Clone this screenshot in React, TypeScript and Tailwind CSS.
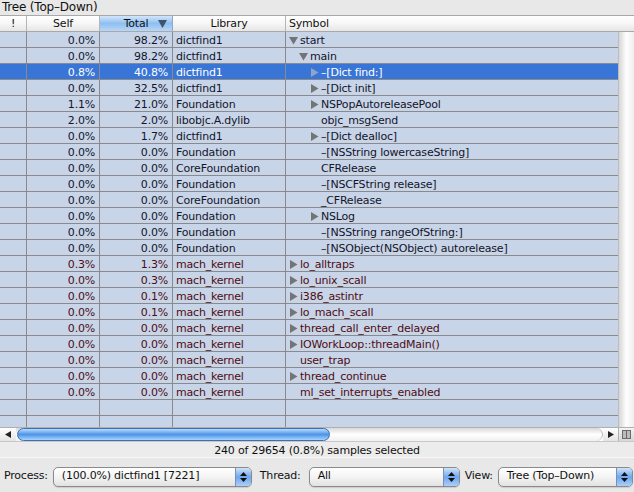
import React from "react";

type Row = {
  self: string;
  total: string;
  lib: string;
  sym: string;
  level: number;
  tri?: "open" | "closed";
  kernel?: boolean;
  selected?: boolean;
};

const rows: Row[] = [
  { self: "0.0%", total: "98.2%", lib: "dictfind1", sym: "start", level: 0, tri: "open" },
  { self: "0.0%", total: "98.2%", lib: "dictfind1", sym: "main", level: 1, tri: "open" },
  { self: "0.8%", total: "40.8%", lib: "dictfind1", sym: "\u2013[Dict find:]", level: 2, tri: "closed", selected: true },
  { self: "0.0%", total: "32.5%", lib: "dictfind1", sym: "\u2013[Dict init]", level: 2, tri: "closed" },
  { self: "1.1%", total: "21.0%", lib: "Foundation", sym: "NSPopAutoreleasePool", level: 2, tri: "closed" },
  { self: "2.0%", total: "2.0%", lib: "libobjc.A.dylib", sym: "objc_msgSend", level: 2 },
  { self: "0.0%", total: "1.7%", lib: "dictfind1", sym: "\u2013[Dict dealloc]", level: 2, tri: "closed" },
  { self: "0.0%", total: "0.0%", lib: "Foundation", sym: "\u2013[NSString lowercaseString]", level: 2 },
  { self: "0.0%", total: "0.0%", lib: "CoreFoundation", sym: "CFRelease", level: 2 },
  { self: "0.0%", total: "0.0%", lib: "Foundation", sym: "\u2013[NSCFString release]", level: 2 },
  { self: "0.0%", total: "0.0%", lib: "CoreFoundation", sym: "_CFRelease", level: 2 },
  { self: "0.0%", total: "0.0%", lib: "Foundation", sym: "NSLog", level: 2, tri: "closed" },
  { self: "0.0%", total: "0.0%", lib: "Foundation", sym: "\u2013[NSString rangeOfString:]", level: 2 },
  { self: "0.0%", total: "0.0%", lib: "Foundation", sym: "\u2013[NSObject(NSObject) autorelease]", level: 2 },
  { self: "0.3%", total: "1.3%", lib: "mach_kernel", sym: "lo_alltraps", level: 0, tri: "closed", kernel: true },
  { self: "0.0%", total: "0.3%", lib: "mach_kernel", sym: "lo_unix_scall", level: 0, tri: "closed", kernel: true },
  { self: "0.0%", total: "0.1%", lib: "mach_kernel", sym: "i386_astintr", level: 0, tri: "closed", kernel: true },
  { self: "0.0%", total: "0.1%", lib: "mach_kernel", sym: "lo_mach_scall", level: 0, tri: "closed", kernel: true },
  { self: "0.0%", total: "0.0%", lib: "mach_kernel", sym: "thread_call_enter_delayed", level: 0, tri: "closed", kernel: true },
  { self: "0.0%", total: "0.0%", lib: "mach_kernel", sym: "IOWorkLoop::threadMain()", level: 0, tri: "closed", kernel: true },
  { self: "0.0%", total: "0.0%", lib: "mach_kernel", sym: "user_trap", level: 0, kernel: true },
  { self: "0.0%", total: "0.0%", lib: "mach_kernel", sym: "thread_continue", level: 0, tri: "closed", kernel: true },
  { self: "0.0%", total: "0.0%", lib: "mach_kernel", sym: "ml_set_interrupts_enabled", level: 0, kernel: true },
];

const indents = ["pl-[3px]", "pl-[13px]", "pl-[24px]"];

function Tri({ open, color }: { open: boolean; color: string }) {
  return (
    <svg width="9" height="9" viewBox="0 0 9 9" className="shrink-0">
      {open ? (
        <polygon points="0,1 9,1 4.5,8.5" fill={color} />
      ) : (
        <polygon points="1,0 8.5,4.5 1,9" fill={color} />
      )}
    </svg>
  );
}

function Popup({ label, width }: { label: string; width: string }) {
  return (
    <div
      className={`${width} h-[20px] flex items-stretch rounded-[5px] border border-[#8a8a8a] bg-gradient-to-b from-white via-[#f4f4f4] to-[#e2e2e2] overflow-hidden shadow-[0_1px_1px_rgba(0,0,0,0.12)]`}
    >
      <div className="flex-1 pl-[8px] flex items-center text-[#111] whitespace-nowrap">{label}</div>
      <div className="w-[16px] border-l border-[#7b8fae] bg-gradient-to-b from-[#cfe3fb] via-[#6fa6ec] to-[#a9cff8] flex flex-col items-center justify-center gap-[2px]">
        <svg width="7" height="4" viewBox="0 0 7 4">
          <polygon points="3.5,0 7,4 0,4" fill="#111" />
        </svg>
        <svg width="7" height="4" viewBox="0 0 7 4">
          <polygon points="0,0 7,0 3.5,4" fill="#111" />
        </svg>
      </div>
    </div>
  );
}

const cols = "grid grid-cols-[27px_73px_73px_113px_1fr]";

export default function App() {
  return (
    <div className="w-[634px] h-[492px] bg-[#e8e8e8] flex flex-col overflow-hidden font-['DejaVu_Sans',sans-serif] text-[11px] tracking-[-0.2px]">
      <div className="h-[15px] pl-[2px] leading-[14px] text-[12px] text-[#111]">Tree (Top&ndash;Down)</div>

      <div className={`${cols} h-[17px] border-y border-[#a8a8a8] bg-gradient-to-b from-white via-[#f6f6f6] to-[#e6e6e6] text-[#111] leading-[15px]`}>
        <div className="text-center border-r border-[#b5b5b5]">!</div>
        <div className="text-center border-r border-[#b5b5b5]">Self</div>
        <div className="relative text-center border-r border-[#8ea8c8] bg-gradient-to-b from-[#d3e6fb] via-[#8fbef0] to-[#b8d7f7]">
          Total
          <svg width="9" height="8" viewBox="0 0 9 8" className="absolute right-[5px] top-[4px]">
            <polygon points="0,0 9,0 4.5,8" fill="#3c5470" />
          </svg>
        </div>
        <div className="text-center border-r border-[#b5b5b5]">Library</div>
        <div className="pl-[3px]">Symbol</div>
      </div>

      <div className="h-[395px] flex">
        <div className="w-[618px] bg-[#c8d4e8] overflow-hidden">
          {rows.map((r, i) => {
            const text = r.selected ? "text-white" : r.kernel ? "text-[#4e0d12]" : "text-[#14142a]";
            const triColor = r.selected ? "#8ea4c8" : "#747474";
            return (
              <div
                key={i}
                className={`${cols} h-[16px] leading-[15px] border-b border-[#8a8a8a] ${r.selected ? "bg-[#3875d7]" : ""} ${text}`}
              >
                <div className="border-r border-[#8a8a8a]" />
                <div className="text-right pr-[4px] pt-[1px] border-r border-[#8a8a8a]">{r.self}</div>
                <div className="text-right pr-[4px] pt-[1px] border-r border-[#8a8a8a]">{r.total}</div>
                <div className="pl-[3px] pt-[1px] border-r border-[#8a8a8a] whitespace-nowrap">{r.lib}</div>
                <div className={`${indents[r.level]} pt-[1px] flex items-center whitespace-nowrap`}>
                  <span className="w-[11px] flex items-center">
                    {r.tri && <Tri open={r.tri === "open"} color={triColor} />}
                  </span>
                  <span>{r.sym}</span>
                </div>
              </div>
            );
          })}
          {[0, 1].map((i) => (
            <div key={`e${i}`} className={`${cols} h-[16px] border-b border-[#8a8a8a]`}>
              <div className="border-r border-[#8a8a8a]" />
              <div className="border-r border-[#8a8a8a]" />
              <div className="border-r border-[#8a8a8a]" />
              <div className="border-r border-[#8a8a8a]" />
              <div />
            </div>
          ))}
        </div>
        <div className="w-[16px] bg-gradient-to-r from-[#d6d6d6] via-white to-[#eeeeee] border-l border-[#bdbdbd]" />
      </div>

      <div className="h-[14px] flex bg-white border-t border-[#b0b0b0]">
        <div className="w-[16px] flex items-center justify-center bg-gradient-to-b from-white to-[#e4e4e4]">
          <svg width="6" height="7" viewBox="0 0 6 7">
            <polygon points="6,0 6,7 0,3.5" fill="#222" />
          </svg>
        </div>
        <div className="flex-1 relative bg-gradient-to-b from-[#d9d9d9] via-white to-[#f0f0f0] rounded-r-[7px] border-r border-[#b8b8b8]">
          <div className="absolute left-[1px] top-0 h-[13px] w-[313px] rounded-[7px] border border-[#3d6fb8] bg-gradient-to-b from-[#b9dbfb] via-[#4d94e8] to-[#a7d6fb]" />
        </div>
        <div className="w-[15px] flex items-center justify-center bg-gradient-to-b from-white to-[#e4e4e4]">
          <svg width="6" height="7" viewBox="0 0 6 7">
            <polygon points="0,0 6,3.5 0,7" fill="#222" />
          </svg>
        </div>
        <div className="w-[16px] flex items-center justify-center border-l border-[#b0b0b0] bg-gradient-to-b from-[#f4f4f4] to-[#d8d8d8]">
          <div className="w-[9px] h-[9px] border border-[#6a6a6a] flex">
            <div className="flex-1 border-r border-[#6a6a6a] bg-[#bbb]" />
            <div className="flex-1 bg-[#bbb]" />
          </div>
        </div>
      </div>

      <div className="h-[17px] bg-[#ececec] border-t border-[#c8c8c8] border-b border-b-[#f8f8f8] text-center leading-[17px] text-[#111]">
        240 of 29654 (0.8%) samples selected
      </div>

      <div className="flex-1 flex items-center pl-[4px] pt-[3px] gap-[5px] text-[#111]">
        <span className="text-[11px]">Process:</span>
        <Popup label="(100.0%) dictfind1 [7221]" width="w-[199px]" />
        <span className="ml-[3px]">Thread:</span>
        <div className="ml-[3px]">
          <Popup label="All" width="w-[151px]" />
        </div>
        <span>View:</span>
        <Popup label={"Tree (Top\u2013Down)"} width="w-[135px]" />
      </div>
    </div>
  );
}
